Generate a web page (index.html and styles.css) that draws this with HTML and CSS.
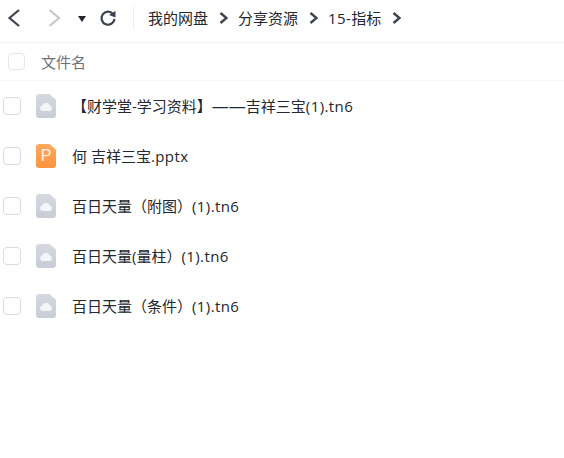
FILE: index.html
```html
<!DOCTYPE html>
<html lang="zh-CN">
<head>
    <meta charset="UTF-8">
    <title>15-指标</title>
    <link rel="stylesheet" href="styles.css">
</head>
<body>
    <div class="toolbar">
        <svg class="nav-back" width="16" height="20" viewBox="0 0 16 20"><path d="M13 2 L3.5 10 L13 18" fill="none" stroke="#3d4450" stroke-width="2.2"/></svg>
        <svg class="nav-next" width="16" height="20" viewBox="0 0 16 20"><path d="M3.5 2 L13 10 L3.5 18" fill="none" stroke="#c4c7cc" stroke-width="2.2"/></svg>
        <span class="nav-drop"></span>
        <svg class="nav-refresh" width="18" height="18" viewBox="0 0 18 18"><path d="M14 5 A6.5 6.5 0 1 0 15.5 10" fill="none" stroke="#3d4450" stroke-width="2.2"/><path d="M10 6 L16.5 2 L16.5 8.5 Z" fill="#3d4450"/></svg>
        <div class="divider"></div>
        <div class="crumbs">
            <span>我的网盘</span><svg class="sep" width="9" height="12" viewBox="0 0 9 12"><path d="M1.5 1 L7.5 6 L1.5 11" fill="none" stroke="#3d4450" stroke-width="2.4"/></svg>
            <span>分享资源</span><svg class="sep" width="9" height="12" viewBox="0 0 9 12"><path d="M1.5 1 L7.5 6 L1.5 11" fill="none" stroke="#3d4450" stroke-width="2.4"/></svg>
            <span><span class="lat">15-</span>指标</span><svg class="sep" width="9" height="12" viewBox="0 0 9 12"><path d="M1.5 1 L7.5 6 L1.5 11" fill="none" stroke="#3d4450" stroke-width="2.4"/></svg>
        </div>
    </div>
    <div class="list-head">
        <span class="check check-head"></span>
        <span class="head-name">文件名</span>
    </div>
    <div class="list">
        <div class="row">
            <span class="check"></span>
            <span class="file-icon gray"><svg width="14" height="9" viewBox="0 0 14 9"><path d="M3 9 A3 3 0 0 1 3 3.4 A4.4 4.4 0 0 1 11 3.4 A3 3 0 0 1 11 9 Z" fill="#f4f5f7"/></svg></span>
            <span class="name">【财学堂-学习资料】<span class="dash">——</span>吉祥三宝<span class="lat">(1).tn6</span></span>
        </div>
        <div class="row">
            <span class="check"></span>
            <span class="file-icon orange"><span class="ppt">P</span></span>
            <span class="name">何 吉祥三宝<span class="lat">.pptx</span></span>
        </div>
        <div class="row">
            <span class="check"></span>
            <span class="file-icon gray"><svg width="14" height="9" viewBox="0 0 14 9"><path d="M3 9 A3 3 0 0 1 3 3.4 A4.4 4.4 0 0 1 11 3.4 A3 3 0 0 1 11 9 Z" fill="#f4f5f7"/></svg></span>
            <span class="name">百日天量（附图）<span class="lat">(1).tn6</span></span>
        </div>
        <div class="row">
            <span class="check"></span>
            <span class="file-icon gray"><svg width="14" height="9" viewBox="0 0 14 9"><path d="M3 9 A3 3 0 0 1 3 3.4 A4.4 4.4 0 0 1 11 3.4 A3 3 0 0 1 11 9 Z" fill="#f4f5f7"/></svg></span>
            <span class="name">百日天量(量柱）<span class="lat">(1).tn6</span></span>
        </div>
        <div class="row">
            <span class="check"></span>
            <span class="file-icon gray"><svg width="14" height="9" viewBox="0 0 14 9"><path d="M3 9 A3 3 0 0 1 3 3.4 A4.4 4.4 0 0 1 11 3.4 A3 3 0 0 1 11 9 Z" fill="#f4f5f7"/></svg></span>
            <span class="name">百日天量（条件）<span class="lat">(1).tn6</span></span>
        </div>
    </div>
</body>
</html>
```

FILE: styles.css
```css
html, body {
    margin: 0;
    padding: 0;
    height: 100%;
    overflow: hidden;
    background-color: #fff;
}

body {
    font-family: "Open Sans", "Noto Sans CJK SC", sans-serif;
    font-size: 15px;
    line-height: 20px;
    color: #23272e;
}

.toolbar {
    box-sizing: content-box;
    display: flex;
    align-items: center;
    height: 36px;
    padding: 0 0 6px 6px;
    border-bottom: 1px solid #f0f0f2;
}

.nav-next {
    margin-left: 24px;
}

.nav-drop {
    width: 0;
    height: 0;
    margin-left: 16px;
    margin-top: 2px;
    border-left: 4px solid transparent;
    border-right: 4px solid transparent;
    border-top: 6px solid #23272e;
}

.nav-refresh {
    margin-left: 13px;
}

.divider {
    width: 1px;
    height: 24px;
    margin-left: 16px;
    background-color: #eeeff1;
}

.crumbs {
    display: flex;
    align-items: center;
    margin-left: 14px;
}

.sep {
    margin: 0 10.5px;
}

.lat {
    letter-spacing: 0.4px;
}

.dash {
    font-size: 17px;
}

.list-head {
    display: flex;
    align-items: center;
    height: 37px;
    border-bottom: 1px solid #f5f5f6;
}

.check {
    flex: none;
    box-sizing: border-box;
    width: 18px;
    height: 18px;
    margin-left: 3px;
    border: 1.5px solid #d5dde6;
    border-radius: 4px;
}

.check-head {
    width: 17px;
    height: 17px;
    margin-left: 8px;
    border-color: #e6e6e8;
}

.head-name {
    margin-left: 16px;
    color: #6f7379;
}

.row {
    display: flex;
    align-items: center;
    height: 50px;
}

.file-icon {
    flex: none;
    display: flex;
    align-items: center;
    justify-content: center;
    width: 20px;
    height: 24px;
    margin-left: 15px;
    border-radius: 3px;
    clip-path: polygon(0 0, 68% 0, 100% 24%, 100% 100%, 0 100%);
}

.gray {
    background: linear-gradient(#d6d9e0, #c8ccd5);
}

.orange {
    background: linear-gradient(#fea85f, #fd9440);
}

.ppt {
    font-family: "Liberation Sans", sans-serif;
    font-size: 16px;
    color: #fff;
    opacity: 0.85;
}

.name {
    margin-left: 16px;
}
```
